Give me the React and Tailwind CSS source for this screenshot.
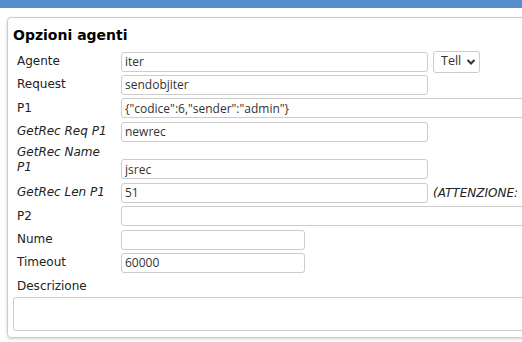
import React from 'react';

const inputCls =
  "h-5 shrink-0 border border-[#cccccc] rounded-[3px] bg-white px-[3px] font-['Open_Sans'] text-[12px] text-[#333] outline-none";

function Row({ label, italic, children }) {
  return (
    <div className="flex items-center h-[23.33px]">
      <div className={`w-[108px] shrink-0 pl-1 leading-[15px] ${italic ? 'italic' : ''}`}>{label}</div>
      {children}
    </div>
  );
}

export default function App() {
  return (
    <div className="w-[522px] h-[342px] overflow-hidden bg-white font-['DejaVu_Sans'] text-[12px] text-[#222]">
      <div className="h-2 bg-[#578dca]" />

      {/* Pannello opzioni */}
      <div className="ml-[7px] mt-[9px] w-[620px] border border-[#cccccc] rounded-[4px] px-[5px] pt-[9px] pb-[6px] shadow-[0_1px_3px_rgba(0,0,0,0.18)]">
        <h2 className="font-bold text-[14px] leading-[17px] mb-[6px] text-black">Opzioni agenti</h2>

        <Row label="Agente">
          <input className={`${inputCls} w-[307px]`} defaultValue="iter" readOnly />
          <div className="ml-[5px] h-[22px] w-[47px] border border-[#cccccc] rounded-[3px] flex items-center pl-[7px] gap-[5px] font-['Open_Sans'] text-[12.5px] text-[#333]">
            <span>Tell</span>
            <svg width="10" height="8" viewBox="0 0 10 8" fill="none">
              <path d="M1.5 2 L5 5.5 L8.5 2" stroke="#333" strokeWidth="2" />
            </svg>
          </div>
        </Row>
        <Row label="Request">
          <input className={`${inputCls} w-[307px]`} defaultValue="sendobjiter" readOnly />
        </Row>
        <Row label="P1">
          <input className={`${inputCls} flex-1`} defaultValue={'{"codice":6,"sender":"admin"}'} readOnly />
        </Row>
        <Row label="GetRec Req P1" italic>
          <input className={`${inputCls} w-[307px]`} defaultValue="newrec" readOnly />
        </Row>

        <div className="flex h-[38px]">
          <div className="w-[108px] shrink-0 pl-1 pr-2 leading-[15px] italic mt-[2px]">GetRec Name P1</div>
          <input className={`${inputCls} w-[307px] self-end mb-[2px]`} defaultValue="jsrec" readOnly />
        </div>

        <Row label="GetRec Len P1" italic>
          <input className={`${inputCls} w-[307px]`} defaultValue="51" readOnly />
          <span className="ml-[5px] italic whitespace-nowrap">(ATTENZIONE:</span>
        </Row>
        <Row label="P2">
          <input className={`${inputCls} flex-1`} defaultValue="" readOnly />
        </Row>
        <Row label="Nume">
          <input className={`${inputCls} w-[184px]`} defaultValue="" readOnly />
        </Row>
        <Row label="Timeout">
          <input className={`${inputCls} w-[184px]`} defaultValue="60000" readOnly />
        </Row>

        <div className="pl-1 leading-[15px] mt-[4px] mb-[3px]">Descrizione</div>
        <textarea className="block w-full h-[34px] border border-[#cccccc] rounded-[3px] resize-none outline-none" readOnly />
      </div>
    </div>
  );
}
